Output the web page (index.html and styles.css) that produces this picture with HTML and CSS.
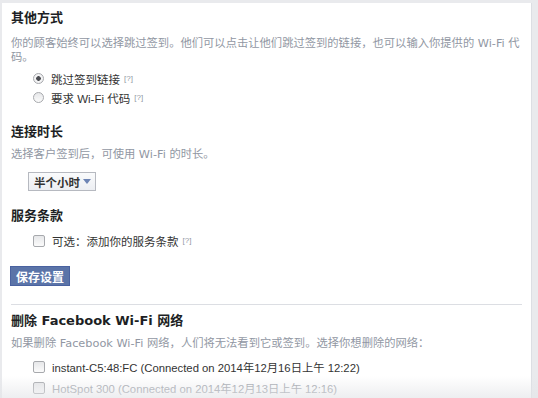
FILE: index.html
```html
<!DOCTYPE html>
<html lang="zh-CN">
<head>
    <meta charset="UTF-8">
    <title>Facebook Wi-Fi 设置</title>
    <link rel="stylesheet" href="styles.css">
</head>
<body>
    <div class="panel">
        <!-- 其他方式 -->
        <h2 class="title">其他方式</h2>
        <p class="desc">你的顾客始终可以选择跳过签到。他们可以点击让他们跳过签到的链接，也可以输入你提供的 Wi-Fi 代码。</p>
        <div class="options">
            <label class="option"><input type="radio" name="mode" checked> 跳过签到链接 <span class="help">[?]</span></label>
            <label class="option"><input type="radio" name="mode"> 要求 Wi-Fi 代码 <span class="help">[?]</span></label>
        </div>

        <!-- 连接时长 -->
        <h2 class="title gap">连接时长</h2>
        <p class="desc tight">选择客户签到后，可使用 Wi-Fi 的时长。</p>
        <button class="dropdown">半个小时 <span class="caret"></span></button>

        <!-- 服务条款 -->
        <h2 class="title gap">服务条款</h2>
        <div class="options terms">
            <label class="option"><input type="checkbox"> 可选：添加你的服务条款 <span class="help">[?]</span></label>
        </div>

        <button class="save">保存设置</button>

        <hr class="divider">

        <!-- 删除网络 -->
        <h2 class="title">删除 Facebook Wi-Fi 网络</h2>
        <p class="desc tight">如果删除 Facebook Wi-Fi 网络，人们将无法看到它或签到。选择你想删除的网络：</p>
        <div class="networks">
            <label class="option"><input type="checkbox"> instant-C5:48:FC (Connected on 2014年12月16日上午 12:22)</label>
            <label class="option muted"><input type="checkbox"> HotSpot 300 (Connected on 2014年12月13日上午 12:16)</label>
        </div>
    </div>
    <div class="fade"></div>
</body>
</html>
```

FILE: styles.css
```css
html, body {
    height: 100%;
}

body {
    margin: 0;
    background-color: #e9eaed;
    font-family: "Liberation Sans", Arial, "Noto Sans CJK SC", sans-serif;
    font-size: 11.5px;
    color: #333;
    overflow: hidden;
    position: relative;
}

.panel {
    margin: 3px 6px 0 2px;
    min-height: 100%;
    padding: 7px 3px 0 9px;
    background-color: #fff;
    border-right: 1px solid #dcdee3;
    box-sizing: border-box;
}

.title {
    margin: 0;
    font-family: "DejaVu Sans", "Noto Sans CJK SC", sans-serif;
    font-size: 13px;
    line-height: 16px;
    font-weight: bold;
    color: #1d1f24;
}

.title.gap {
    margin-top: 17px;
}

.desc {
    margin: 11px 0 0 0;
    font-family: "DejaVu Sans", "Noto Sans CJK SC", sans-serif;
    font-size: 11.3px;
    line-height: 14px;
    color: #9197a3;
}

.desc.tight {
    margin-top: 8px;
}

.options {
    margin-top: 4px;
    padding-left: 20px;
}

.options.terms {
    margin-top: 7px;
}

.option {
    display: flex;
    align-items: center;
    height: 19px;
    color: #333;
}

.option input {
    appearance: none;
    margin: 0 7px 0 2px;
    width: 11px;
    height: 11px;
    border: 1px solid #a7a9ad;
    background: linear-gradient(#e6e7e9, #fbfbfb);
    box-sizing: border-box;
}

.option input[type="radio"] {
    border-radius: 50%;
}

.option input[type="radio"]:checked {
    background: radial-gradient(circle, #4b4d52 0, #4b4d52 2px, #f3f3f4 2.6px);
}

.option input[type="checkbox"] {
    border-radius: 2px;
    width: 12px;
    height: 12px;
}

.help {
    margin-left: 4px;
    font-size: 8px;
    color: #9197a3;
}

.dropdown {
    display: flex;
    align-items: center;
    gap: 3px;
    margin: 10px 0 0 17px;
    height: 19px;
    padding: 0 4px 0 5px;
    border: 1px solid #b6b9c0;
    background: linear-gradient(#fafbfc, #eceef2);
    font-family: inherit;
    font-size: 11.5px;
    font-weight: bold;
    color: #333;
}

.caret {
    width: 0;
    height: 0;
    border-left: 4px solid transparent;
    border-right: 4px solid transparent;
    border-top: 5px solid #6d84b4;
}

.save {
    display: block;
    margin: 16px 0 0 -1px;
    height: 20px;
    padding: 0 5px;
    border: 1px solid #4a62a0;
    background-color: #5b74a8;
    font-family: inherit;
    font-size: 12px;
    font-weight: bold;
    color: #fff;
}

.divider {
    margin: 18px 6px 8px 0;
    border: 0;
    border-top: 1px solid #dcdee3;
}

.networks {
    margin-top: 5px;
    padding-left: 20px;
}

.networks .option {
    height: 21px;
    font-size: 11.3px;
}

.option.muted {
    color: #a0a4ab;
}

.fade {
    position: absolute;
    left: 0;
    right: 0;
    bottom: 0;
    height: 22px;
    background: linear-gradient(rgba(233, 234, 237, 0), rgba(228, 229, 232, 0.65));
}
```
